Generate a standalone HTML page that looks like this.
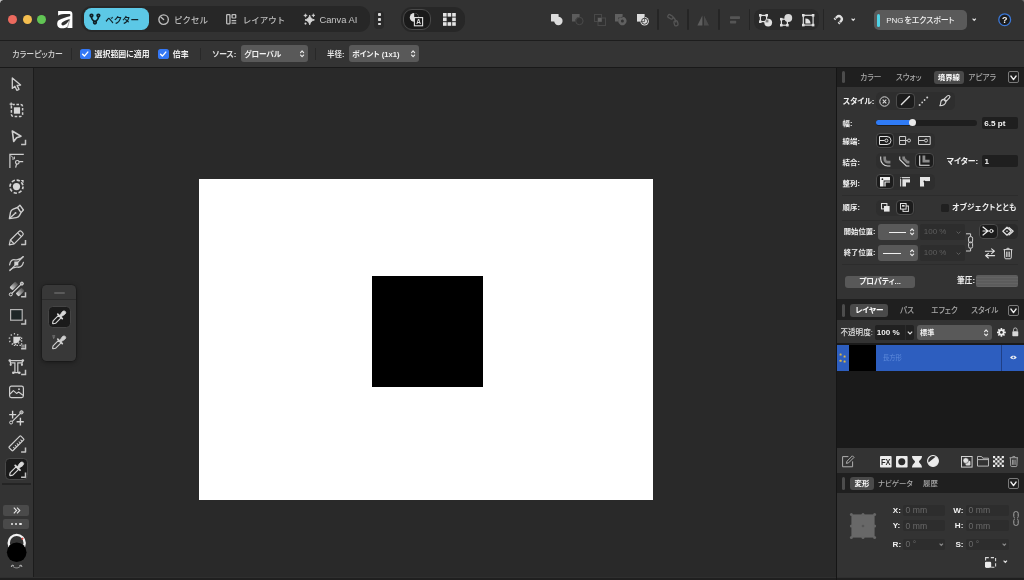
<!DOCTYPE html>
<html lang="ja">
<head>
<meta charset="utf-8">
<title>Affinity</title>
<style>
*{box-sizing:border-box;margin:0;padding:0}
html,body{width:1024px;height:580px;overflow:hidden;background:#292929}
body{position:relative;font-family:"Liberation Sans","Noto Sans CJK JP",sans-serif;font-size:8px;color:#e6e6e6;-webkit-font-smoothing:antialiased}
.abs{position:absolute}
.t{position:absolute;white-space:nowrap;line-height:12px;height:12px;font-size:8px;font-feature-settings:"palt"}
.np{font-feature-settings:normal}
.b{font-weight:700}
.m{font-weight:500}
svg{position:absolute;overflow:visible}
/* top toolbar */
#top{left:0;top:0;width:1024px;height:40px;background:#323232}
#topline{left:0;top:40px;width:1024px;height:1px;background:#1d1d1d}
#ctx{left:0;top:41px;width:1024px;height:26px;background:#343434}
#ctxline{left:0;top:67px;width:1024px;height:1px;background:#191919}
/* left tools */
#left{left:0;top:68px;width:33px;height:512px;background:#333333}
#leftline{left:33px;top:68px;width:1.3px;height:512px;background:#1c1c1c}
/* canvas */
#canvas{left:34.3px;top:68px;width:801.7px;height:512px;background:#292929}
#page{left:198.5px;top:178.5px;width:454.5px;height:321px;background:#ffffff}
#sq{left:371.7px;top:275.6px;width:111.4px;height:111.3px;background:#000}
/* right */
#right{left:836px;top:68px;width:188px;height:512px;background:#333333}
.hdr{position:absolute;left:836px;width:188px;background:#1f1f1f}
.pill{position:absolute;background:#4a4a4a;border-radius:3px}
.sel{position:absolute;background:#1c1c1c;border:1px solid #4c4c4c;border-radius:4px}
.dd{position:absolute;background:#595959;border-radius:3px}
.inp{position:absolute;background:#1f1f1f;border-radius:2px}
.fld{position:absolute;background:#2d2d2d;border-radius:2px}
.sep{position:absolute;width:1.7px;background:#252525;top:9px;height:21px;border-radius:1px}
.hl{position:absolute;height:1px;background:#2c2c2c;left:842px;width:176px}
.grip{position:absolute;width:3px;background:#4c4c4c;border-radius:1.5px;left:842.2px}
.vbtn{position:absolute;left:1007.5px;width:11.5px;height:11.5px;border:1px solid #7a7a7a;border-radius:2px}
.g{color:#a8a8a8}
.dim{color:#666}
</style>
</head>
<body>
<div id="root" style="position:absolute;left:0;top:0;width:1024px;height:580px;transform:translateZ(0);will-change:transform">
<div id="top" class="abs"></div>
<div id="topline" class="abs"></div>
<div id="ctx" class="abs"></div>
<div id="ctxline" class="abs"></div>
<div id="left" class="abs"></div>
<div id="leftline" class="abs"></div>
<div id="canvas" class="abs"></div>
<div id="page" class="abs"></div>
<div id="sq" class="abs"></div>
<div id="right" class="abs"></div>

<!-- ===== TOP BAR ===== -->
<div class="abs" style="left:8.4px;top:14.9px;width:9px;height:9px;border-radius:50%;background:#ec6a5e"></div>
<div class="abs" style="left:22.75px;top:14.9px;width:9px;height:9px;border-radius:50%;background:#f4be4f"></div>
<div class="abs" style="left:37px;top:14.9px;width:9px;height:9px;border-radius:50%;background:#61c554"></div>
<svg style="left:56.6px;top:10.5px" width="16" height="18" viewBox="0 0 16 18">
  <path fill="#ffffff" d="M1.1,0.1 H12.4 C14.4,0.1 15.4,1.2 15.4,3 V16.9 H10.1 L10.5,15.7 C8.6,17 6,17.6 3.8,17.2 C1.4,16.8 0,15 0.16,12.4 C0.3,10.8 0.8,9.6 1.4,8.5 L1.1,4.6 Z"/>
  <path fill="#323232" d="M-0.5,4.4 L1.1,4.4 C3.4,3.3 7,2.9 12.8,3.1 C13.6,3.6 13.6,4.8 12.8,5.3 C9,6 4.8,7.6 1.7,9.3 L-0.5,11 Z"/>
  <path fill="#323232" d="M12.8,8 C10,8.9 6.8,10.1 5.1,11.6 C3.8,12.8 4.3,14.5 5.9,14.4 C8.2,14.2 11.2,11.6 12.8,8 Z"/>
  <path d="M12.8,8.5 L10.4,16.6" stroke="#323232" stroke-width="0.45" fill="none"/>
</svg>
<div class="abs" style="left:81px;top:6.4px;width:289px;height:26px;border-radius:11px;background:#272727"></div>
<div class="abs" style="left:83.5px;top:8.1px;width:65.7px;height:22.4px;border-radius:7.5px;background:#5cc8e6"></div>
<svg style="left:89px;top:13px" width="12" height="12" viewBox="0 0 12 12" fill="none" stroke="#0f1f25" stroke-width="1.7">
  <circle cx="2.5" cy="2.6" r="1.3"/><circle cx="9.4" cy="2.6" r="1.3"/><circle cx="5.95" cy="9.5" r="1.3"/>
  <path d="M2.5,4 C2.5,6.8 4.2,7.4 5,8.4 M9.4,4 C9.4,6.8 7.7,7.4 6.9,8.4"/>
</svg>
<div class="t b np" style="left:105.3px;top:13.5px;font-size:8.5px;color:#122329">ベクター</div>
<svg style="left:157.6px;top:13.8px" width="11.6" height="11.6" viewBox="0 0 12 12" fill="none" stroke="#bdbdbd" stroke-width="1.4">
  <circle cx="5.8" cy="5.8" r="4.9"/><path d="M5.8,5.8 L3.2,3.4" stroke-linecap="round"/>
</svg>
<div class="t m np" style="left:174px;top:13.5px;font-size:8.5px;color:#bdbdbd">ピクセル</div>
<svg style="left:226.4px;top:14px" width="10.6" height="10.6" viewBox="0 0 11 12" preserveAspectRatio="none" fill="none" stroke="#bdbdbd" stroke-width="1.35">
  <rect x="0.7" y="0.7" width="3.4" height="10.4" rx="0.6"/><rect x="6.3" y="0.7" width="3.8" height="3.8" rx="0.6"/>
  <path d="M5.8,7.4 H10.6 M5.8,10.4 H10.6"/>
</svg>
<div class="t m np" style="left:242.8px;top:13.5px;font-size:8.5px;color:#bdbdbd">レイアウト</div>
<svg style="left:302.5px;top:13px" width="13" height="13" viewBox="0 0 13 13" fill="#d4d4d4">
  <path d="M6.7,2.2 C7.3,4.8 8.4,5.9 11.4,6.9 C8.4,7.9 7.3,9 6.7,11.8 C6.1,9 5,7.9 2,6.9 C5,5.9 6.1,4.8 6.7,2.2 Z" stroke="#d4d4d4" stroke-width="0.9" stroke-linejoin="round"/>
  <path d="M2.5,0.8 C2.7,1.9 3,2.2 4.2,2.5 C3,2.8 2.7,3.1 2.5,4.2 C2.3,3.1 2,2.8 0.8,2.5 C2,2.2 2.3,1.9 2.5,0.8 Z" stroke="#d4d4d4" stroke-width="0.7" stroke-linejoin="round"/>
  <path d="M10.4,0.7 C10.6,1.8 10.8,2.1 12,2.4 C10.8,2.7 10.6,3 10.4,4.1 C10.2,3 10,2.7 8.8,2.4 C10,2.1 10.2,1.8 10.4,0.7 Z" stroke="#d4d4d4" stroke-width="0.6" stroke-linejoin="round"/>
  <circle cx="2.5" cy="10.6" r="1.05"/>
</svg>
<div class="t" style="left:319.4px;top:13.5px;font-size:9.4px;color:#c4c4c4">Canva AI</div>
<div class="abs" style="left:374.4px;top:10.5px;width:10px;height:18px;border-radius:4px;background:#2a2a2a"></div>
<div class="abs" style="left:378px;top:13.4px;width:2.8px;height:2.8px;border-radius:.8px;background:#d8d8d8"></div>
<div class="abs" style="left:378px;top:18px;width:2.8px;height:2.8px;border-radius:.8px;background:#d8d8d8"></div>
<div class="abs" style="left:378px;top:22.5px;width:2.8px;height:2.8px;border-radius:.8px;background:#d8d8d8"></div>
<div class="abs" style="left:401px;top:7px;width:64px;height:25.4px;border-radius:11px;background:#272727"></div>
<div class="abs" style="left:403px;top:9px;width:27.6px;height:21.4px;border-radius:9px;background:#1a1a1a;border:1.2px solid #4a4a4a"></div>
<svg style="left:409.4px;top:12.2px" width="15" height="15" viewBox="0 0 15 15">
  <circle cx="5.2" cy="5.4" r="4.4" fill="#e0e0e0"/>
  <path d="M5.2,5.4 L5.2,1 A4.4,4.4 0 0 1 9.6,5.4 Z" fill="#1a1a1a"/>
  <rect x="5.4" y="5.6" width="8.2" height="8.2" fill="#1a1a1a" stroke="#e0e0e0" stroke-width="1.1"/>
  <text x="9.5" y="12.4" font-size="6.5" font-weight="700" fill="#e0e0e0" text-anchor="middle" font-family="Liberation Sans, sans-serif">A</text>
</svg>
<svg style="left:443.3px;top:13.1px" width="12.8" height="12.8" viewBox="0 0 13.4 13.4" fill="#e4e4e4">
  <rect x="0" y="0" width="3.8" height="3.8"/><rect x="4.8" y="0" width="3.8" height="3.8"/><rect x="9.6" y="0" width="3.8" height="3.8"/>
  <rect x="0" y="4.8" width="3.8" height="3.8"/><rect x="9.6" y="4.8" width="3.8" height="3.8"/>
  <rect x="0" y="9.6" width="3.8" height="3.8"/><rect x="4.8" y="9.6" width="3.8" height="3.8"/><rect x="9.6" y="9.6" width="3.8" height="3.8"/>
</svg>
<!-- boolean ops -->
<svg style="left:551px;top:14px" width="12" height="12" viewBox="0 0 12 12" fill="#dcdcdc">
  <rect x="0" y="0" width="7.6" height="7.6" rx="0.6"/><circle cx="7.4" cy="7" r="4.2"/>
</svg>
<svg style="left:572.2px;top:14px" width="12" height="12" viewBox="0 0 12 12">
  <path fill="#5c5c5c" d="M0,0 H7.6 V3 A4.2,4.2 0 0 0 3.2,7.6 H0 Z"/><circle cx="7.4" cy="7" r="3.7" fill="none" stroke="#4a4a4a" stroke-width="1"/>
</svg>
<svg style="left:593.5px;top:14px" width="12" height="12" viewBox="0 0 12 12">
  <rect x="0.5" y="0.5" width="7" height="7" fill="none" stroke="#484848" stroke-width="1"/><rect x="4" y="4" width="7.5" height="7.5" fill="none" stroke="#484848" stroke-width="1"/>
  <rect x="4" y="4" width="3.6" height="3.6" fill="#606060"/>
</svg>
<svg style="left:615px;top:14px" width="12" height="12" viewBox="0 0 12 12">
  <path fill="#606060" fill-rule="evenodd" d="M0,0 H7.6 V7.6 H0 Z M7.4,2.8 A4.2,4.2 0 1 1 7.39,2.8 Z M3.4,3.4 H7.6 V7.6 H3.4 Z"/>
  <circle cx="7.4" cy="7" r="1.5" fill="#323232"/>
</svg>
<svg style="left:636.6px;top:14px" width="12" height="12" viewBox="0 0 12 12">
  <rect x="0" y="0" width="7.6" height="7.6" fill="#dcdcdc"/>
  <circle cx="7.6" cy="7.2" r="4.3" fill="#dcdcdc"/>
  <circle cx="7.6" cy="7.2" r="3" fill="none" stroke="#323232" stroke-width="0.9"/>
  <path d="M3.6,7.6 H7.6 V3.4" fill="none" stroke="#323232" stroke-width="0.7"/>
</svg>
<div class="sep" style="left:657px"></div>
<svg style="left:667px;top:13.6px" width="13" height="12" viewBox="0 0 13 12" fill="none" stroke="#555555" stroke-width="1.3">
  <rect x="0.8" y="1.2" width="5.2" height="3.2" rx="1" transform="rotate(30 3.4 2.8)"/>
  <path d="M6,3.5 C8,4 8.5,6 9,8.5"/>
  <rect x="7.2" y="6.8" width="3.6" height="5" rx="1.4" transform="rotate(-15 9 9.3)"/>
</svg>
<div class="sep" style="left:687.3px"></div>
<svg style="left:697.3px;top:15px" width="12.4" height="11" viewBox="0 0 12.4 11">
  <path d="M5.4,0.4 V10.6 H0.4 Z" fill="#5e5e5e"/><path d="M7,0.4 V10.6 H12 Z" fill="#4a4a4a"/>
</svg>
<div class="sep" style="left:718px"></div>
<svg style="left:730px;top:16.2px" width="11" height="8" viewBox="0 0 11 8" fill="#555555">
  <rect x="0" y="0.3" width="10" height="2.6" rx="0.6"/><rect x="0" y="4.8" width="6.2" height="2.6" rx="0.6"/>
</svg>
<div class="sep" style="left:748.6px"></div>
<div class="abs" style="left:753.7px;top:9.4px;width:65.8px;height:20.8px;border-radius:8px;background:#2a2a2a"></div>
<svg style="left:758.8px;top:13.5px" width="13.4" height="12.6" viewBox="0 0 13.4 12.6">
  <rect x="1.4" y="1.4" width="6.2" height="6.2" fill="none" stroke="#e0e0e0" stroke-width="1.2"/>
  <g fill="#e0e0e0"><rect x="0" y="0" width="2.6" height="2.6"/><rect x="6.4" y="0" width="2.6" height="2.6"/><rect x="0" y="6.4" width="2.6" height="2.6"/></g>
  <circle cx="9.2" cy="8.6" r="3.9" fill="#e0e0e0"/><rect x="6.6" y="5.6" width="2.8" height="2.8" fill="#2a2a2a" opacity=".55"/>
</svg>
<svg style="left:780.2px;top:13.6px" width="12.4" height="12.6" viewBox="0 0 12.4 12.6">
  <rect x="1.4" y="5.2" width="6" height="6" fill="none" stroke="#e0e0e0" stroke-width="1.2"/>
  <g fill="#e0e0e0"><rect x="0" y="3.9" width="2.6" height="2.6"/><rect x="0" y="9.9" width="2.6" height="2.6"/><rect x="6.1" y="9.9" width="2.6" height="2.6"/></g>
  <circle cx="8.3" cy="4" r="3.9" fill="#d8d8d8"/>
</svg>
<svg style="left:801.8px;top:13.8px" width="12.4" height="12.4" viewBox="0 0 12.4 12.4">
  <rect x="1.3" y="1.3" width="9.8" height="9.8" fill="none" stroke="#e0e0e0" stroke-width="1.2"/>
  <g fill="#e0e0e0"><rect x="0" y="0" width="2.6" height="2.6"/><rect x="9.8" y="0" width="2.6" height="2.6"/><rect x="0" y="9.8" width="2.6" height="2.6"/><rect x="9.8" y="9.8" width="2.6" height="2.6"/></g>
  <path d="M3.4,9.4 V4.4 A5,5 0 0 1 8.6,9.4 Z" fill="#e0e0e0"/>
</svg>
<div class="sep" style="left:822.8px"></div>
<svg style="left:833.4px;top:14.4px" width="11" height="11" viewBox="0 0 11 11" fill="none" stroke="#e0e0e0">
  <g transform="translate(5.9,5.1) rotate(45)"><path d="M-2.9,3.5 V0 A2.9,2.9 0 0 1 2.9,0 V3.5" stroke-width="2.3"/><path d="M-4.4,1.7 H-1.4 M1.4,1.7 H4.4" stroke="#323232" stroke-width="0.9"/></g>
</svg>
<svg style="left:851.4px;top:17.9px" width="4.4" height="3.2" viewBox="0 0 6 4" fill="none" stroke="#e0e0e0" stroke-width="1.7"><path d="M0.8,0.7 L3,3 L5.2,0.7"/></svg>
<div class="abs" style="left:874px;top:10.3px;width:93px;height:19.4px;border-radius:5px;background:#5a5a5a"></div>
<div class="abs" style="left:876.8px;top:13.5px;width:3.1px;height:13px;border-radius:1.5px;background:#4fd3e6"></div>
<div class="t m" style="left:886.3px;top:14.5px;font-size:8px;letter-spacing:-0.1px;color:#f0f0f0">PNG<span style="margin-left:1px">をエクスポート</span></div>
<svg style="left:971.8px;top:18.4px" width="4.4" height="3.2" viewBox="0 0 6 4" fill="none" stroke="#e0e0e0" stroke-width="1.7"><path d="M0.8,0.7 L3,3 L5.2,0.7"/></svg>
<svg style="left:998px;top:13.4px" width="13.4" height="13.4" viewBox="0 0 13.4 13.4">
  <circle cx="6.7" cy="6.7" r="5.9" fill="#1c1c1c" stroke="#3b78d8" stroke-width="1.3"/>
  <text x="6.7" y="9.9" font-size="9" font-weight="700" fill="#f2f2f2" text-anchor="middle" font-family="Liberation Sans, sans-serif">?</text>
</svg>

<!-- ===== CONTEXT BAR ===== -->
<div class="t m" style="left:12.2px;top:49.3px;font-size:7.9px;color:#d6d6d6">カラーピッカー</div>
<div class="abs" style="left:71px;top:48px;width:1px;height:12px;background:#282828"></div>
<div class="abs" style="left:80.4px;top:48.5px;width:10.2px;height:10.2px;border-radius:2.6px;background:#3478f6"></div>
<svg style="left:80.4px;top:48.5px" width="10.2" height="10.2" viewBox="0 0 10.2 10.2" fill="none" stroke="#ffffff" stroke-width="1.4" stroke-linecap="round" stroke-linejoin="round"><path d="M2.6,5.3 L4.4,7.1 L7.8,3.1"/></svg>
<div class="t b" style="left:94.6px;top:49.3px;font-size:7.9px;color:#f2f2f2">選択範囲に適用</div>
<div class="abs" style="left:158.4px;top:48.5px;width:10.2px;height:10.2px;border-radius:2.6px;background:#3478f6"></div>
<svg style="left:158.4px;top:48.5px" width="10.2" height="10.2" viewBox="0 0 10.2 10.2" fill="none" stroke="#ffffff" stroke-width="1.4" stroke-linecap="round" stroke-linejoin="round"><path d="M2.6,5.3 L4.4,7.1 L7.8,3.1"/></svg>
<div class="t b" style="left:172.8px;top:49.3px;font-size:7.9px;color:#f2f2f2">倍率</div>
<div class="abs" style="left:199.6px;top:48px;width:1px;height:12px;background:#282828"></div>
<div class="t b" style="left:212.2px;top:49.3px;font-size:7.8px;color:#e0e0e0">ソース:</div>
<div class="dd" style="left:241.2px;top:44.9px;width:66.6px;height:17.5px"></div>
<div class="t b" style="left:244.2px;top:48.6px;font-size:7.6px;color:#f2f2f2">グローバル</div>
<svg style="left:300px;top:50.2px" width="4.2" height="7.6" viewBox="0 0 5 9" fill="none" stroke="#e8e8e8" stroke-width="1.4" stroke-linecap="round" stroke-linejoin="round"><path d="M0.7,3 L2.5,1 L4.3,3 M0.7,6 L2.5,8 L4.3,6"/></svg>
<div class="abs" style="left:314.6px;top:48px;width:1px;height:12px;background:#282828"></div>
<div class="t b" style="left:327px;top:49.3px;font-size:7.5px;color:#e0e0e0">半径:</div>
<div class="dd" style="left:348.7px;top:45.2px;width:70px;height:17.3px"></div>
<div class="t b" style="left:352.2px;top:48.6px;font-size:7.6px;color:#f2f2f2">ポイント (1x1)</div>
<svg style="left:411px;top:50.2px" width="4.2" height="7.6" viewBox="0 0 5 9" fill="none" stroke="#e8e8e8" stroke-width="1.4" stroke-linecap="round" stroke-linejoin="round"><path d="M0.7,3 L2.5,1 L4.3,3 M0.7,6 L2.5,8 L4.3,6"/></svg>

<!-- ===== LEFT TOOLS ===== -->

<!-- 1 move -->
<svg style="left:8px;top:76px" width="17" height="17" viewBox="0 0 17 17" fill="none" stroke="#cfcfcf" stroke-width="1.3" stroke-linejoin="round">
  <path d="M4.3,1.9 L4.3,12.4 L6.9,10.3 L8.8,14.3 L11,13.3 L9.1,9.4 L12.6,9.1 Z"/>
</svg>
<!-- 2 artboard -->
<svg style="left:8px;top:102px" width="17" height="17" viewBox="0 0 17 17" fill="none" stroke="#cfcfcf" stroke-width="1.3">
  <rect x="3.4" y="2.6" width="11.2" height="11.8" rx="2" stroke-width="1.5" stroke-dasharray="2.6 1.6" stroke-dashoffset="1.2"/>
  <rect x="5.9" y="5.3" width="6.2" height="6.4" fill="#d6d6d6" stroke="none"/>
  <path d="M1.6,2.1 H4.8 M3.2,0.5 V3.7" stroke-width="1.1"/>
</svg>
<!-- 3 node -->
<svg style="left:8px;top:128px" width="19" height="18" viewBox="0 0 19 18" fill="none" stroke="#cfcfcf" stroke-width="1.6" stroke-linejoin="round">
  <path d="M4.3,3 L13,8.2 L8.6,9.8 L5.7,13.4 Z"/>
  <path d="M17.5,11.8 V16.4 H13.1" stroke-width="1.5" stroke="#c4c4c4"/>
</svg>
<!-- 4 corner -->
<svg style="left:8px;top:153px" width="17" height="17" viewBox="0 0 17 17" fill="none" stroke="#cfcfcf" stroke-width="1.2">
  <path d="M1.9,15 V1.4 H15.8"/>
  <path d="M2.8,2.4 L5.6,5.2" stroke-width="1"/><path d="M6.4,3.6 V6 H4" stroke-width="1"/>
  <circle cx="9.3" cy="9.3" r="1.8"/>
  <path d="M11.1,8.7 H15.2 M8.6,11 L7.6,14.6"/>
</svg>
<!-- 5 dashed circle -->
<svg style="left:8px;top:178px" width="17" height="17" viewBox="0 0 17 17" fill="none" stroke="#cfcfcf" stroke-width="1.5">
  <circle cx="8.5" cy="8.6" r="6.5" stroke-width="1.7" stroke-dasharray="3.3 1.8" stroke-dashoffset="0.6"/>
  <circle cx="8.5" cy="8.6" r="3.6" fill="#d8d8d8" stroke="none"/>
  <path d="M12.6,1.9 H15.6 V4.9 Z" fill="#d8d8d8" stroke="none"/>
</svg>
<!-- 6 pen -->
<svg style="left:8px;top:204px" width="17" height="17" viewBox="0 0 17 17" fill="none" stroke="#cfcfcf" stroke-width="1.35" stroke-linejoin="round">
  <path d="M1.4,14.6 L2.5,8.4 C2.8,6.8 3.8,5.8 5.2,5.2 L9.5,3.5 L13,8.6 L11.4,11.6 C10.8,12.8 9.8,13.4 8.4,13.6 Z"/>
  <path d="M9.5,3.5 L11.9,1.2 L15.4,6 L13,8.6"/>
  <path d="M1.8,14.2 L6.9,9.4"/><circle cx="7.5" cy="8.9" r="1" fill="#cfcfcf" stroke="none"/>
</svg>
<!-- 7 pencil -->
<svg style="left:8px;top:230px" width="19" height="18" viewBox="0 0 19 18" fill="none" stroke="#cfcfcf" stroke-width="1.2" stroke-linejoin="round">
  <path d="M1.3,14.8 L2.4,10 L10.8,1.6 C11.6,0.8 12.8,0.8 13.6,1.6 L14.6,2.6 C15.4,3.4 15.4,4.6 14.6,5.4 L6.2,13.8 Z"/>
  <path d="M2.4,10 L6.2,13.8 M9.6,2.8 L13.4,6.6"/>
  <path d="M17.5,10.0 V14.6 H13.1" stroke-width="1.5" stroke="#c4c4c4"/>
</svg>
<!-- 8 smooth -->
<svg style="left:8px;top:255px" width="17" height="17" viewBox="0 0 17 17" fill="none" stroke="#c8c8c8" stroke-width="1.3" stroke-linecap="round">
  <path d="M1.6,9.8 C2.4,5.8 4.4,4.2 7,4.8 C10,5.4 12.4,4.6 15,1.8"/>
  <path d="M2,15 C4.6,12.4 6.8,11.8 9.6,12.2 C12.2,12.6 14.4,11 15.4,7.4"/>
  <path d="M1.8,15.6 L15.4,1.6" stroke-width="1.1"/>
  <rect x="6.3" y="6.5" width="4" height="4" fill="#d4d4d4" stroke="none"/>
</svg>
<!-- 9 gradient -->
<svg style="left:8px;top:281px" width="19" height="19" viewBox="0 0 19 19">
  <defs><linearGradient id="gg1" x1="0" y1="0" x2="1" y2="0"><stop offset="0" stop-color="#dcdcdc"/><stop offset="1" stop-color="#505050"/></linearGradient></defs>
  <g transform="translate(6.2,5.2) rotate(-45)"><rect x="-4.2" y="-2.6" width="8.4" height="4.4" rx="1.2" fill="url(#gg1)"/></g>
  <g transform="translate(11.8,10.8) rotate(-45)"><rect x="-4.2" y="-1.8" width="8.4" height="4.4" rx="1.2" fill="url(#gg1)"/></g>
  <path d="M3.6,12.6 L13,3.4" stroke="#e0e0e0" stroke-width="1.1" fill="none"/>
  <circle cx="2.8" cy="13.4" r="1.5" fill="#333" stroke="#e0e0e0" stroke-width="1"/>
  <circle cx="13.9" cy="2.6" r="1.5" fill="#9a9a9a" stroke="#e0e0e0" stroke-width="1"/>
  <path d="M17.5,11.2 V15.8 H13.1" stroke-width="1.5" stroke="#c4c4c4" fill="none"/>
</svg>
<!-- 10 rectangle -->
<svg style="left:8px;top:307px" width="19" height="19" viewBox="0 0 19 19" fill="none">
  <rect x="2.6" y="2.6" width="11.6" height="10.6" fill="#1e2728" stroke="#b4b4b4" stroke-width="1.2"/>
  <path d="M17.5,12.4 V17.0 H13.1" stroke-width="1.5" stroke="#c4c4c4"/>
</svg>
<!-- 11 shape builder -->
<svg style="left:8px;top:332px" width="19" height="19" viewBox="0 0 19 19" fill="none">
  <circle cx="6.8" cy="7.2" r="5.4" stroke="#c8c8c8" stroke-width="1.5" stroke-dasharray="1.3 2.1"/>
  <path d="M5.4,4.8 H12.2 C12.2,9.6 10,11.6 5.4,11.8 Z" fill="#d8d8d8"/>
  <path d="M13.6,5.4 V13.4 H5.8" stroke="#c8c8c8" stroke-width="1.3" stroke-dasharray="1.5 1.4"/>
  <rect x="13.4" y="12.6" width="3.2" height="3.2" fill="#8a8a8a"/>
  <path d="M17.5,12.2 V16.8 H13.1" stroke-width="1.5" stroke="#c4c4c4"/>
</svg>
<!-- 12 text -->
<svg style="left:8px;top:358px" width="19" height="19" viewBox="0 0 19 19" fill="none" stroke="#cfcfcf" stroke-width="1.2">
  <path d="M1.8,2.6 H14.8 M2.1,2.8 L2.7,6.4 M14.5,2.8 L13.9,6.4 M2.8,4.9 H6.9 V14 M13.8,4.9 H9.8 V14 M5.4,14.6 H11.2"/>
  <g fill="#cfcfcf" stroke="none"><circle cx="1.8" cy="2.5" r="1.3"/><circle cx="14.8" cy="2.5" r="1.3"/><circle cx="2.7" cy="6.8" r="1.1"/><circle cx="13.9" cy="6.8" r="1.1"/><circle cx="5.3" cy="14.7" r="1.3"/><circle cx="11.3" cy="14.7" r="1.3"/></g>
  <path d="M17.5,11.8 V16.4 H13.1" stroke-width="1.5" stroke="#c4c4c4"/>
</svg>
<!-- 13 image -->
<svg style="left:8px;top:384px" width="17" height="16" viewBox="0 0 17 16" fill="none" stroke="#cfcfcf" stroke-width="1.2" stroke-linejoin="round">
  <rect x="1.6" y="2.2" width="13.8" height="11.4" rx="1.8"/>
  <path d="M2,10 L5.4,6.6 L8.6,9.4 L10.6,8 L15,11.2"/>
  <circle cx="11" cy="5.2" r="0.9" fill="#cfcfcf" stroke="none"/>
</svg>
<!-- 14 vector crop -->
<svg style="left:8px;top:409px" width="17" height="17" viewBox="0 0 17 17" fill="none" stroke="#d4d4d4" stroke-width="1.4">
  <path d="M1.2,5.6 H8.2 M4.6,1.8 V9.6"/>
  <path d="M8.6,12.8 H15.8 M12.4,8.8 V16.4"/>
  <path d="M3.8,12.8 L12.8,4" stroke-width="1.1"/>
  <circle cx="3.1" cy="13.5" r="1.5" fill="#333" stroke-width="1"/>
  <circle cx="13.5" cy="3.3" r="1.6" fill="#9a9a9a" stroke-width="1"/>
</svg>
<!-- 15 ruler -->
<svg style="left:8px;top:435px" width="19" height="19" viewBox="0 0 19 19" fill="none" stroke="#cfcfcf" stroke-width="1.2" stroke-linejoin="round">
  <g transform="rotate(-45 8.5 8.4)"><rect x="0.2" y="5.6" width="16.6" height="5.4" rx="0.8"/>
  <path d="M3.6,11 V8.6 M6.2,11 V8.6 M8.8,11 V8.6 M11.4,11 V8.6 M14,11 V8.6" stroke-width="1"/></g>
  <path d="M17.5,12.4 V17.0 H13.1" stroke-width="1.5" stroke="#c4c4c4"/>
</svg>
<!-- 16 picker selected -->
<div class="sel" style="left:4.6px;top:457.8px;width:23.6px;height:22px;border-radius:4.5px;background:#1b1b1b;border-color:#484848"></div>
<svg style="left:8px;top:460px" width="19" height="19" viewBox="0 0 19 19" fill="none" stroke="#d8d8d8" stroke-width="1.2" stroke-linejoin="round">
  <g id="dropper"><path d="M1.7,15.2 L2.2,12.6 L8,6.8 L10.6,9.4 L4.8,15.2 L2.2,15.7 Z" fill="none"/>
  <path d="M7.2,5.4 L12,10.2" stroke-width="1.8" stroke-linecap="round"/>
  <path d="M9.4,7 L11.4,3.6 C12.4,2 14.2,1.6 15.2,2.6 C16.2,3.6 15.6,5.2 14,6.2 L10.6,8.2 Z" fill="#d8d8d8" stroke-width="0.8"/></g>
  <path d="M17.5,12.6 V17.2 H13.1" stroke-width="1.5" stroke="#c4c4c4"/>
</svg>
<div class="abs" style="left:2px;top:483.4px;width:28.6px;height:1.2px;background:#242424"></div>
<div class="abs" style="left:3.2px;top:505.4px;width:26.2px;height:11px;border-radius:2px;background:#4a4a4a"></div>
<svg style="left:12.6px;top:507.4px" width="8" height="7" viewBox="0 0 8 7" fill="none" stroke="#e4e4e4" stroke-width="1.1"><path d="M0.8,0.6 L3.6,3.5 L0.8,6.4 M4,0.6 L6.8,3.5 L4,6.4"/></svg>
<div class="abs" style="left:3.2px;top:519px;width:26.2px;height:10.2px;border-radius:2px;background:#4a4a4a"></div>
<div class="abs" style="left:10.9px;top:522.9px;width:2.4px;height:2.4px;border-radius:50%;background:#ececec"></div>
<div class="abs" style="left:15.1px;top:522.9px;width:2.4px;height:2.4px;border-radius:50%;background:#ececec"></div>
<div class="abs" style="left:19.3px;top:522.9px;width:2.4px;height:2.4px;border-radius:50%;background:#ececec"></div>
<svg style="left:5px;top:531px" width="24" height="42" viewBox="0 0 24 42" fill="none">
  <circle cx="11.7" cy="11.9" r="8" stroke="#f2f2f2" stroke-width="2.4" fill="#333"/>
  <path d="M16.7,8.4 L18.1,7" stroke="#e0403a" stroke-width="1.4"/>
  <circle cx="11.7" cy="21.2" r="9.8" fill="#000000"/>
  <path d="M7.4,34.8 C9.8,37.6 13.4,37.6 15.8,34.8" stroke="#9a9a9a" stroke-width="1"/>
  <path d="M6.2,36 L7.1,34 L9,34.9 M17,36 L16.1,34 L14.2,34.9" stroke="#b4b4b4" stroke-width="1"/>
</svg>

<!-- ===== FLYOUT ===== -->
<div class="abs" style="left:42px;top:285px;width:34.2px;height:76.2px;border-radius:4.5px;background:#383838;box-shadow:0 1px 5px rgba(0,0,0,.45),0 0 0 0.5px rgba(0,0,0,.25)"></div>
<div class="abs" style="left:42px;top:298.8px;width:34.2px;height:1px;background:#2b2b2b"></div>
<div class="abs" style="left:53.8px;top:291.6px;width:11px;height:2px;border-radius:1px;background:#5a5a5a"></div>
<div class="sel" style="left:48.2px;top:306px;width:22.8px;height:22.2px;border-radius:4.5px;background:#1b1b1b;border-color:#454545"></div>
<svg style="left:51px;top:308.7px" width="17.9" height="17.9" viewBox="0 0 19 19" fill="none" stroke="#d8d8d8" stroke-width="1.2" stroke-linejoin="round">
  <path d="M1.7,15.2 L2.2,12.6 L8,6.8 L10.6,9.4 L4.8,15.2 L2.2,15.7 Z"/>
  <path d="M7.2,5.4 L12,10.2" stroke-width="1.8" stroke-linecap="round"/>
  <path d="M9.4,7 L11.4,3.6 C12.4,2 14.2,1.6 15.2,2.6 C16.2,3.6 15.6,5.2 14,6.2 L10.6,8.2 Z" fill="#d8d8d8" stroke-width="0.8"/>
</svg>
<svg style="left:51px;top:334px" width="17.9" height="17.9" viewBox="0 0 19 19" fill="none" stroke="#cfcfcf" stroke-width="1.2" stroke-linejoin="round">
  <path d="M1.7,15.2 L2.2,12.6 L8,6.8 L10.6,9.4 L4.8,15.2 L2.2,15.7 Z"/>
  <path d="M7.2,5.4 L12,10.2" stroke-width="1.8" stroke-linecap="round"/>
  <path d="M9.4,7 L11.4,3.6 C12.4,2 14.2,1.6 15.2,2.6 C16.2,3.6 15.6,5.2 14,6.2 L10.6,8.2 Z" fill="#cfcfcf" stroke-width="0.8"/>
  <path d="M1.4,2 H4.4 M1.9,3.4 H3.9 M2.4,4.6 H3.4" stroke="#9a9a9a" stroke-width="0.8"/>
</svg>

<!-- ===== STROKE PANEL ===== -->
<div class="hdr" style="top:68px;height:19.4px"></div>
<div class="grip" style="top:70.8px;height:12.4px"></div>
<div class="t m g" style="left:860.3px;top:71.8px;font-size:7.6px">カラー</div>
<div class="t m g" style="left:896px;top:71.8px;font-size:7.6px">スウォッ</div>
<div class="pill" style="left:933.5px;top:70.8px;width:30.4px;height:13px"></div>
<div class="t b" style="left:937.8px;top:71.8px;font-size:7.4px;color:#fff">境界線</div>
<div class="t m g" style="left:968.3px;top:71.8px;font-size:7.6px">アピアラ</div>
<div class="vbtn" style="top:71.4px"></div>
<svg style="left:1009.8px;top:74.6px" width="7" height="6" viewBox="0 0 7 6" fill="none" stroke="#f0f0f0" stroke-width="1.3" stroke-linecap="round" stroke-linejoin="round"><path d="M0.9,1 L3.5,4.6 L6.1,1"/></svg>

<div class="t b" style="left:842.8px;top:96px;font-size:7.8px;color:#f2f2f2">スタイル:</div>
<div class="abs" style="left:876px;top:91.6px;width:78.6px;height:18.6px;border-radius:5px;background:#2e2e2e"></div>
<svg style="left:879.4px;top:95.5px" width="11" height="11" viewBox="0 0 11 11" fill="none" stroke="#d8d8d8" stroke-width="1"><circle cx="5.5" cy="5.5" r="4.7"/><path d="M3.7,3.7 L7.3,7.3 M7.3,3.7 L3.7,7.3" stroke-width="1.1"/></svg>
<div class="sel" style="left:895.6px;top:92.8px;width:19.6px;height:16.2px;border-radius:4px"></div>
<svg style="left:900px;top:95.4px" width="11" height="11" viewBox="0 0 11 11" fill="none" stroke="#e0e0e0" stroke-width="1.4" stroke-linecap="round"><path d="M1.4,9.4 L9.4,1.6"/></svg>
<svg style="left:918.4px;top:95.6px" width="11" height="11" viewBox="0 0 11 11" fill="#cfcfcf"><circle cx="1.6" cy="9" r="1"/><circle cx="4.2" cy="6.4" r="0.9"/><circle cx="6.6" cy="4" r="0.9"/><circle cx="9.2" cy="1.6" r="1"/></svg>
<svg style="left:939.4px;top:94.6px" width="11.4" height="11.4" viewBox="0 0 11.4 11.4" fill="none" stroke="#d4d4d4" stroke-width="1.1" stroke-linejoin="round">
  <path d="M5.2,4 L8.4,0.9 C9.2,0.2 10.2,0.4 10.6,1 C11.2,1.6 11,2.4 10.4,3 L7.4,6.2 Z"/>
  <path d="M4.6,4.4 L7,6.8 C6.4,9 3.6,10.6 0.8,10.6 C1.8,9.6 1.6,8.6 1.8,7.2 C2,5.6 3.2,4.6 4.6,4.4 Z"/>
</svg>

<div class="t b" style="left:842.6px;top:117.9px;font-size:7.4px;color:#f2f2f2">幅:</div>
<div class="abs" style="left:876.2px;top:119.6px;width:101.2px;height:6.2px;border-radius:3.1px;background:#1e1e1e"></div>
<div class="abs" style="left:876.2px;top:119.9px;width:37px;height:5.6px;border-radius:2.8px;background:#2f7bf6"></div>
<div class="abs" style="left:909px;top:119.3px;width:7px;height:7px;border-radius:50%;background:#e8e8e8"></div>
<div class="inp" style="left:982.4px;top:117.2px;width:35.2px;height:12px"></div>
<div class="t b" style="left:984.2px;top:118.1px;font-size:8.1px;color:#f4f4f4">6.5 pt</div>

<div class="t b" style="left:842.6px;top:135.9px;font-size:7.4px;color:#f2f2f2">線端:</div>
<div class="abs" style="left:876px;top:132.6px;width:58.6px;height:16px;border-radius:5px;background:#2e2e2e"></div>
<div class="sel" style="left:876.2px;top:133.2px;width:17.8px;height:14.8px;border-radius:4px"></div>
<svg style="left:879px;top:135.8px" width="13" height="9" viewBox="0 0 13 9" fill="none" stroke="#e0e0e0" stroke-width="1"><path d="M0.5,0.5 H8 A4,4 0 0 1 8,8.5 H0.5 Z"/><path d="M0.5,4.5 H5.6"/><circle cx="7.4" cy="4.5" r="1.5"/></svg>
<svg style="left:899px;top:135.8px" width="13" height="9" viewBox="0 0 13 9" fill="none" stroke="#cfcfcf" stroke-width="1"><path d="M0.5,0.5 H6.6 V8.5 H0.5 Z"/><path d="M0.5,4.5 H8.4"/><circle cx="10" cy="4.5" r="1.5"/></svg>
<svg style="left:918.4px;top:135.8px" width="13" height="9" viewBox="0 0 13 9" fill="none" stroke="#cfcfcf" stroke-width="1"><path d="M0.5,0.5 H12.2 V8.5 H0.5 Z"/><path d="M0.5,4.5 H6.4"/><circle cx="8" cy="4.5" r="1.5"/></svg>

<div class="t b" style="left:842.6px;top:156.5px;font-size:7.4px;color:#f2f2f2">結合:</div>
<div class="abs" style="left:876px;top:152.8px;width:58.6px;height:16px;border-radius:5px;background:#2e2e2e"></div>
<svg style="left:879.6px;top:155.6px" width="11" height="11" viewBox="0 0 11 11" fill="none"><path d="M4.7,0.4 V3 A3.2,3.2 0 0 0 7.9,6.2 H10.4" stroke="#858585" stroke-width="2.7"/><path d="M0.7,0.4 V3 A7,7 0 0 0 7.7,10 H10.4" stroke="#d8d8d8" stroke-width="1.1"/></svg>
<svg style="left:899.4px;top:155.6px" width="11" height="11" viewBox="0 0 11 11" fill="none"><path d="M4.7,0.4 V2.6 L8.3,6.2 H10.4" stroke="#858585" stroke-width="2.7"/><path d="M0.7,0.4 V3.4 L7.3,10 H10.4" stroke="#d8d8d8" stroke-width="1.1"/></svg>
<div class="sel" style="left:915.4px;top:153.2px;width:18.4px;height:15px;border-radius:4px"></div>
<svg style="left:919px;top:155.4px" width="11" height="11" viewBox="0 0 11 11" fill="none"><path d="M4.9,0.4 V6.2 H10.6" stroke="#8c8c8c" stroke-width="2.8"/><path d="M0.7,0.4 V10.2 H10.6" stroke="#e4e4e4" stroke-width="1.1"/></svg>
<div class="t b" style="left:946.6px;top:156.2px;font-size:7.9px;color:#f2f2f2">マイター:</div>
<div class="inp" style="left:982.4px;top:155.4px;width:35.2px;height:12px"></div>
<div class="t b" style="left:984.4px;top:156.2px;font-size:8.1px;color:#f4f4f4">1</div>

<div class="t b" style="left:842.6px;top:177.9px;font-size:7.4px;color:#f2f2f2">整列:</div>
<div class="abs" style="left:876px;top:173.8px;width:58.6px;height:16px;border-radius:5px;background:#2e2e2e"></div>
<div class="sel" style="left:875.8px;top:174.2px;width:18.2px;height:15.2px;border-radius:4px"></div>
<svg style="left:880.4px;top:177.2px" width="10" height="10" viewBox="0 0 10 10"><path d="M0,0 H10 V3.6 H3.6 V9.6 H0 Z" fill="#f0f0f0"/><path d="M5,9.6 V5 H10" fill="none" stroke="#f0f0f0" stroke-width="1.2"/><circle cx="2.4" cy="2.2" r="0.9" fill="#1c1c1c"/></svg>
<svg style="left:900px;top:177.2px" width="10" height="10" viewBox="0 0 10 10"><path d="M0.6,9.6 V0.6 H10" fill="none" stroke="#d0d0d0" stroke-width="1.1"/><path d="M2.4,2.2 H10 V5.6 H6 V9.6 H2.4 Z" fill="#e4e4e4"/><circle cx="1.2" cy="1.2" r="0.9" fill="#1c1c1c"/></svg>
<svg style="left:920.2px;top:177.2px" width="10" height="10" viewBox="0 0 10 10"><path d="M0,0 H10 V4.4 H4.4 V9.6 H0 Z" fill="#e4e4e4"/><path d="M4.6,9.6 V4.6 H10" fill="none" stroke="#1c1c1c" stroke-width="0.8"/><circle cx="4.4" cy="4.4" r="0.9" fill="#1c1c1c"/></svg>

<div class="hl" style="top:195px"></div>
<div class="t b" style="left:842.6px;top:202.3px;font-size:7.4px;color:#f2f2f2">順序:</div>
<div class="abs" style="left:876px;top:199.6px;width:38.6px;height:16.2px;border-radius:5px;background:#2e2e2e"></div>
<svg style="left:880.8px;top:203px" width="9" height="9" viewBox="0 0 9 9"><rect x="0.5" y="0.5" width="5.4" height="5.4" fill="none" stroke="#e0e0e0" stroke-width="1"/><rect x="3" y="3" width="5.6" height="5.6" fill="#e8e8e8"/></svg>
<div class="sel" style="left:895.8px;top:200px;width:18.4px;height:15.4px;border-radius:4px"></div>
<svg style="left:900.4px;top:203.2px" width="9" height="9" viewBox="0 0 9 9"><rect x="3" y="3" width="5.4" height="5.4" fill="none" stroke="#e0e0e0" stroke-width="1"/><rect x="0.5" y="0.5" width="5.6" height="5.6" fill="#1c1c1c" stroke="#e0e0e0" stroke-width="1"/><rect x="2" y="2" width="2.6" height="1.6" fill="#e0e0e0"/></svg>
<div class="abs" style="left:941px;top:204.4px;width:7.6px;height:7.4px;border-radius:1.6px;background:#202020"></div>
<div class="t b" style="left:952.2px;top:202.2px;font-size:7.6px;letter-spacing:.33px;color:#f2f2f2">オブジェクトととも</div>
<div class="hl" style="top:220px"></div>

<div class="t b" style="left:843.8px;top:226.2px;font-size:7.3px;color:#f2f2f2">開始位置:</div>
<div class="dd" style="left:878.4px;top:224.2px;width:39.8px;height:15.6px"></div>
<div class="abs" style="left:889.2px;top:231.5px;width:17.2px;height:1.1px;background:#f0f0f0"></div>
<svg style="left:910.2px;top:228.3px" width="4.2" height="7.6" viewBox="0 0 5 9" fill="none" stroke="#e8e8e8" stroke-width="1.4" stroke-linecap="round" stroke-linejoin="round"><path d="M0.7,3 L2.5,1 L4.3,3 M0.7,6 L2.5,8 L4.3,6"/></svg>
<div class="fld" style="left:920px;top:224.4px;width:45px;height:15.2px"></div>
<div class="t" style="left:923.8px;top:226.2px;font-size:8px;color:#5e5e5e">100 %</div>
<svg style="left:955.6px;top:230.8px" width="5" height="3.4" viewBox="0 0 6 4" fill="none" stroke="#5e5e5e" stroke-width="1.2"><path d="M0.8,0.7 L3,3 L5.2,0.7"/></svg>
<div class="abs" style="left:979.2px;top:224px;width:38.6px;height:15.4px;border-radius:4.5px;background:#2b2b2b"></div>
<div class="sel" style="left:979.2px;top:224px;width:18.4px;height:15.2px;border-radius:4px"></div>
<svg style="left:982.4px;top:226.4px" width="12" height="10" viewBox="0 0 12 10" fill="none" stroke="#f0f0f0" stroke-width="1.2" stroke-linecap="round"><path d="M1,1 L6,5 L1,9 M1,5 H7.4"/><circle cx="9.4" cy="5" r="1.6" stroke-width="1"/></svg>
<svg style="left:1002.4px;top:226.2px" width="12" height="10.4" viewBox="0 0 12 10.4" fill="none" stroke="#e0e0e0" stroke-width="1.2" stroke-linejoin="round"><path d="M0.8,5.2 L5,1.2 L9.2,5.2 L5,9.2 Z"/><path d="M6.6,1.2 L11.2,5.2 L6.6,9.2" /><circle cx="5" cy="5.2" r="0.8" fill="#e0e0e0" stroke="none"/></svg>

<div class="t b" style="left:843.8px;top:247.4px;font-size:7.3px;color:#f2f2f2">終了位置:</div>
<div class="dd" style="left:878.4px;top:245.2px;width:39.8px;height:15.6px"></div>
<div class="abs" style="left:883px;top:252.5px;width:17.6px;height:1.1px;background:#f0f0f0"></div>
<svg style="left:910.2px;top:249.3px" width="4.2" height="7.6" viewBox="0 0 5 9" fill="none" stroke="#e8e8e8" stroke-width="1.4" stroke-linecap="round" stroke-linejoin="round"><path d="M0.7,3 L2.5,1 L4.3,3 M0.7,6 L2.5,8 L4.3,6"/></svg>
<div class="fld" style="left:920px;top:245.4px;width:45px;height:15.2px"></div>
<div class="t" style="left:923.8px;top:247.2px;font-size:8px;color:#5e5e5e">100 %</div>
<svg style="left:955.6px;top:251.8px" width="5" height="3.4" viewBox="0 0 6 4" fill="none" stroke="#5e5e5e" stroke-width="1.2"><path d="M0.8,0.7 L3,3 L5.2,0.7"/></svg>
<svg style="left:964.6px;top:232.6px" width="10" height="19" viewBox="0 0 10 19" fill="none" stroke="#d0d0d0" stroke-width="1"><path d="M1,0.8 H5.6 V3.2 M1,18 H5.6 V15.6"/><rect x="3.6" y="3.6" width="4" height="6.2" rx="1.6"/><rect x="3.6" y="9" width="4" height="6.2" rx="1.6"/></svg>
<svg style="left:983.6px;top:248px" width="12" height="11" viewBox="0 0 12 11" fill="none" stroke="#e0e0e0" stroke-width="1.1" stroke-linecap="round" stroke-linejoin="round"><path d="M1.4,3.2 H10.4 M7.6,0.8 L10.4,3.2 L7.6,5.6"/><path d="M10.6,7.6 H1.6 M4.4,5.4 L1.6,7.6 L4.4,10"/></svg>
<svg style="left:1003.4px;top:247px" width="10" height="12.4" viewBox="0 0 10 12.4" fill="none" stroke="#d8d8d8" stroke-width="1"><path d="M0.6,2.6 H9.4 M3.2,2.4 C3.4,0.8 6.6,0.8 6.8,2.4"/><path d="M1.4,2.8 L1.8,11 C1.9,11.6 2.3,11.8 2.8,11.8 H7.2 C7.7,11.8 8.1,11.6 8.2,11 L8.6,2.8"/><path d="M3.6,4.6 V10 M5,4.6 V10 M6.4,4.6 V10" stroke-width="0.9"/></svg>
<div class="hl" style="top:264.4px"></div>

<div class="dd" style="left:844.8px;top:276.2px;width:70.6px;height:11.6px;background:#585858"></div>
<div class="t b" style="left:844.8px;top:276px;width:70.6px;text-align:center;font-size:7.7px;color:#f4f4f4">プロパティ...</div>
<div class="t b" style="left:957px;top:275.4px;font-size:7.7px;color:#f2f2f2">筆圧:</div>
<div class="abs" style="left:976.4px;top:275.2px;width:41.4px;height:12.2px;border-radius:2px;background:repeating-linear-gradient(180deg,#5c5c5c 0,#5c5c5c 2px,#636363 2px,#636363 3px)"></div>

<!-- ===== LAYERS PANEL ===== -->
<div class="hdr" style="top:299px;height:21px;background:#1f1f1f"></div>
<div class="grip" style="top:304.4px;height:12.4px"></div>
<div class="pill" style="left:850.2px;top:304.2px;width:37.6px;height:12.6px"></div>
<div class="t b" style="left:855.2px;top:305px;font-size:7.6px;color:#fff">レイヤー</div>
<div class="t m g" style="left:900px;top:305px;font-size:7.6px">パス</div>
<div class="t m g" style="left:931.2px;top:305px;font-size:7.6px">エフェク</div>
<div class="t m g" style="left:971.2px;top:305px;font-size:7.6px">スタイル</div>
<div class="vbtn" style="top:304.6px"></div>
<svg style="left:1009.8px;top:307.8px" width="7" height="6" viewBox="0 0 7 6" fill="none" stroke="#f0f0f0" stroke-width="1.3" stroke-linecap="round" stroke-linejoin="round"><path d="M0.9,1 L3.5,4.6 L6.1,1"/></svg>

<div class="t m" style="left:840.4px;top:326.6px;font-size:7.6px;color:#e0e0e0">不透明度:</div>
<div class="inp" style="left:874.8px;top:325.4px;width:39.4px;height:14.4px;background:#212121"></div>
<div class="abs" style="left:905px;top:325.4px;width:1px;height:14.4px;background:#2c2c2c"></div>
<div class="t b" style="left:876.8px;top:326.8px;font-size:8.1px;color:#f2f2f2">100 %</div>
<svg style="left:907px;top:330.8px" width="6" height="4" viewBox="0 0 6 4" fill="none" stroke="#e0e0e0" stroke-width="1.2"><path d="M0.8,0.7 L3,3 L5.2,0.7"/></svg>
<div class="dd" style="left:916.8px;top:325.4px;width:75px;height:14.4px"></div>
<div class="t b" style="left:920px;top:326.8px;font-size:7.2px;color:#f2f2f2">標準</div>
<svg style="left:984.2px;top:328.9px" width="4.2" height="7.6" viewBox="0 0 5 9" fill="none" stroke="#e8e8e8" stroke-width="1.4" stroke-linecap="round" stroke-linejoin="round"><path d="M0.7,3 L2.5,1 L4.3,3 M0.7,6 L2.5,8 L4.3,6"/></svg>
<svg style="left:996.6px;top:328.2px" width="8.8" height="8.8" viewBox="0 0 10.4 10.4">
  <g fill="#ececec"><circle cx="5.2" cy="5.2" r="3.6"/>
  <g id="teeth"><rect x="4.2" y="0" width="2" height="10.4" rx="0.4"/><rect x="4.2" y="0" width="2" height="10.4" rx="0.4" transform="rotate(45 5.2 5.2)"/><rect x="4.2" y="0" width="2" height="10.4" rx="0.4" transform="rotate(90 5.2 5.2)"/><rect x="4.2" y="0" width="2" height="10.4" rx="0.4" transform="rotate(135 5.2 5.2)"/></g></g>
  <circle cx="5.2" cy="5.2" r="1.6" fill="#333"/>
</svg>
<svg style="left:1011.8px;top:327.4px" width="6.6" height="9.6" viewBox="0 0 8 11.4"><path d="M1.8,5 V3.2 A2.2,2.2 0 0 1 6.2,3.2 V5" fill="none" stroke="#d0d0d0" stroke-width="1"/><rect x="0.4" y="5" width="7.2" height="6" rx="0.8" fill="#d8d8d8"/></svg>

<div class="abs" style="left:836px;top:343.4px;width:188px;height:106px;background:#1a1a1a"></div>
<div class="abs" style="left:836px;top:344.6px;width:188px;height:26.4px;background:#2d5ebf"></div>
<div class="abs" style="left:848.6px;top:344.6px;width:27px;height:26.4px;background:#000"></div>
<div class="abs" style="left:1001px;top:344.6px;width:1px;height:26.4px;background:#1f3f86"></div>
<svg style="left:839.4px;top:352.6px" width="8" height="11" viewBox="0 0 8 11" fill="#d9b648"><rect x="0.6" y="0.6" width="2" height="2" rx="0.4"/><rect x="4.6" y="2.6" width="2" height="2" rx="0.4"/><rect x="0.6" y="6.8" width="2" height="2" rx="0.4"/><rect x="4.6" y="7.6" width="2" height="2" rx="0.4"/></svg>
<div class="t" style="left:883px;top:351.6px;font-size:6.3px;color:#5f8bdb">長方形</div>
<svg style="left:1010px;top:355.2px" width="6.8" height="4.9" viewBox="0 0 9 6.4"><path d="M0.2,3.2 C2,0.2 7,0.2 8.8,3.2 C7,6.2 2,6.2 0.2,3.2 Z" fill="#f4f4f4"/><circle cx="4.5" cy="3.2" r="1.4" fill="#2d5ebf"/></svg>

<div class="abs" style="left:836px;top:448.4px;width:188px;height:24.6px;background:#333333"></div>
<svg style="left:841.6px;top:455.2px" width="13" height="12.4" viewBox="0 0 13 12.4" fill="none" stroke="#b0b0b0" stroke-width="1"><path d="M6.4,1.6 H0.6 V11.8 H10.6 V6.4"/><path d="M4.4,8.4 L5,6.2 L10.4,0.8 L12,2.4 L6.6,7.8 Z" stroke-linejoin="round"/></svg>
<svg style="left:880px;top:455.6px" width="11.6" height="11.6" viewBox="0 0 11.6 11.6"><rect width="11.6" height="11.6" rx="0.8" fill="#ececec"/><text x="5.8" y="9.2" font-size="8.4" font-weight="700" fill="#2a2a2a" text-anchor="middle" textLength="9.6" lengthAdjust="spacingAndGlyphs" font-family="Liberation Sans, sans-serif">FX</text></svg>
<svg style="left:895.6px;top:455.6px" width="11.6" height="11.6" viewBox="0 0 11.6 11.6"><rect width="11.6" height="11.6" rx="0.8" fill="#ececec"/><circle cx="5.8" cy="5.8" r="3.5" fill="#2a2a2a"/></svg>
<svg style="left:912px;top:455.6px" width="10" height="11.6" viewBox="0 0 10 11.6"><path d="M0,0 H10 C10,3.4 7,4.4 7,5.8 C7,7.2 10,8.2 10,11.6 H0 C0,8.2 3,7.2 3,5.8 C3,4.4 0,3.4 0,0 Z" fill="#ececec"/></svg>
<svg style="left:926.8px;top:455.4px" width="12" height="12" viewBox="0 0 12 12"><circle cx="6" cy="6" r="5.4" fill="#ececec" stroke="#ececec" stroke-width="1.1"/><path d="M8.6,1.7 A5,5 0 0 0 1.5,7.6 Z" fill="#333"/></svg>
<svg style="left:961.2px;top:455.6px" width="11.6" height="11.6" viewBox="0 0 11.6 11.6"><rect x="0.5" y="0.5" width="10.6" height="10.6" fill="none" stroke="#d0d0d0" stroke-width="1"/><circle cx="4.8" cy="4.6" r="2.8" fill="#e4e4e4"/><rect x="4.6" y="4.8" width="4.8" height="4.6" rx="1.2" fill="#dcdcdc"/><circle cx="4.8" cy="4.6" r="2.8" fill="none" stroke="#333" stroke-width="0.5"/></svg>
<svg style="left:976.8px;top:456.2px" width="12" height="10.6" viewBox="0 0 12 10.6" fill="none" stroke="#b8b8b8" stroke-width="1" stroke-linejoin="round"><path d="M0.5,10.1 V0.5 H4.6 L5.8,2.2 H11.5 V10.1 Z"/><path d="M0.5,3.6 H11.5"/></svg>
<svg style="left:992.5px;top:455.8px" width="10.9" height="10.9" viewBox="0 0 5 5" fill="#f0f0f0"><path d="M0,0h1v1h-1zM2,0h1v1h-1zM4,0h1v1h-1zM1,1h1v1h-1zM3,1h1v1h-1zM0,2h1v1h-1zM2,2h1v1h-1zM4,2h1v1h-1zM1,3h1v1h-1zM3,3h1v1h-1zM0,4h1v1h-1zM2,4h1v1h-1zM4,4h1v1h-1z"/></svg>
<svg style="left:1009.4px;top:455.2px" width="9.6" height="12.4" viewBox="0 0 10 12.4" fill="none" stroke="#a8a8a8" stroke-width="1"><path d="M0.6,2.6 H9.4 M3.2,2.4 C3.4,0.8 6.6,0.8 6.8,2.4"/><path d="M1.4,2.8 L1.8,11 C1.9,11.6 2.3,11.8 2.8,11.8 H7.2 C7.7,11.8 8.1,11.6 8.2,11 L8.6,2.8"/><path d="M3.6,4.6 V10 M5,4.6 V10 M6.4,4.6 V10" stroke-width="0.9"/></svg>

<!-- ===== TRANSFORM PANEL ===== -->
<div class="hdr" style="top:473px;height:20.4px;background:#1f1f1f"></div>
<div class="grip" style="top:477.4px;height:12.4px"></div>
<div class="pill" style="left:850.2px;top:477.2px;width:23.6px;height:12.8px"></div>
<div class="t b" style="left:854.6px;top:478px;font-size:7.4px;color:#fff">変形</div>
<div class="t m g" style="left:878px;top:478px;font-size:7.4px">ナビゲータ</div>
<div class="t m g" style="left:923px;top:478px;font-size:7.4px">履歴</div>
<div class="vbtn" style="top:477.6px"></div>
<svg style="left:1009.8px;top:480.8px" width="7" height="6" viewBox="0 0 7 6" fill="none" stroke="#f0f0f0" stroke-width="1.3" stroke-linecap="round" stroke-linejoin="round"><path d="M0.9,1 L3.5,4.6 L6.1,1"/></svg>

<svg style="left:849.4px;top:511.8px" width="28" height="28" viewBox="0 0 28 28" fill="#666666">
  <rect x="2.4" y="2.4" width="23.2" height="23.2" fill="#686868"/>
  <circle cx="2.4" cy="2.4" r="1.5"/><circle cx="14" cy="2.4" r="1.5"/><circle cx="25.6" cy="2.4" r="1.5"/>
  <circle cx="2.4" cy="14" r="1.5"/><circle cx="25.6" cy="14" r="1.5"/>
  <circle cx="2.4" cy="25.6" r="1.5"/><circle cx="14" cy="25.6" r="1.5"/><circle cx="25.6" cy="25.6" r="1.5"/>
  <circle cx="14" cy="14" r="1.3" fill="#555"/>
</svg>
<div class="t b" style="left:892.8px;top:504.6px;font-size:8.1px;color:#f2f2f2">X:</div>
<div class="fld" style="left:903px;top:504.6px;width:42.2px;height:11.2px"></div>
<div class="t" style="left:905.6px;top:504.2px;font-size:8.6px;color:#6a6a6a">0 mm</div>
<div class="t b" style="left:892.8px;top:520.4px;font-size:8.1px;color:#f2f2f2">Y:</div>
<div class="fld" style="left:903px;top:520.2px;width:42.2px;height:11.2px"></div>
<div class="t" style="left:905.6px;top:520px;font-size:8.6px;color:#6a6a6a">0 mm</div>
<div class="t b" style="left:892.6px;top:538.8px;font-size:8.1px;color:#f2f2f2">R:</div>
<div class="fld" style="left:903px;top:538.6px;width:42.2px;height:11.2px"></div>
<div class="t" style="left:905.6px;top:538.2px;font-size:8.6px;color:#6a6a6a">0 °</div>
<svg style="left:939.4px;top:542.8px" width="4.6" height="3.2" viewBox="0 0 6 4" fill="none" stroke="#8a8a8a" stroke-width="1.5"><path d="M0.8,0.7 L3,3 L5.2,0.7"/></svg>

<div class="t b" style="left:953.2px;top:504.6px;font-size:8.1px;color:#f2f2f2">W:</div>
<div class="fld" style="left:966.2px;top:504.6px;width:42.4px;height:11.2px"></div>
<div class="t" style="left:968.6px;top:504.2px;font-size:8.6px;color:#6a6a6a">0 mm</div>
<div class="t b" style="left:954.8px;top:519.6px;font-size:8.1px;color:#f2f2f2">H:</div>
<div class="fld" style="left:966.2px;top:520.2px;width:42.4px;height:11.2px"></div>
<div class="t" style="left:968.6px;top:520px;font-size:8.6px;color:#6a6a6a">0 mm</div>
<div class="t b" style="left:955.4px;top:538.8px;font-size:8.1px;color:#f2f2f2">S:</div>
<div class="fld" style="left:966.2px;top:538.6px;width:42.4px;height:11.2px"></div>
<div class="t" style="left:968.6px;top:538.2px;font-size:8.6px;color:#6a6a6a">0 °</div>
<svg style="left:1002.2px;top:542.8px" width="4.6" height="3.2" viewBox="0 0 6 4" fill="none" stroke="#8a8a8a" stroke-width="1.5"><path d="M0.8,0.7 L3,3 L5.2,0.7"/></svg>
<svg style="left:1013.4px;top:511px" width="6" height="15" viewBox="0 0 6 15" fill="none" stroke="#a4a4a4" stroke-width="1"><rect x="0.8" y="0.6" width="4.4" height="6.6" rx="1.8"/><rect x="0.8" y="7.8" width="4.4" height="6.6" rx="1.8"/><path d="M3,5 V10" stroke="#333" stroke-width="2.4"/><path d="M3,5.4 V9.6" stroke="#c8c8c8" stroke-width="0.01"/></svg>
<svg style="left:984.8px;top:556.8px" width="11.4" height="10.8" viewBox="0 0 11.4 10.8" fill="none"><rect x="0.6" y="0.6" width="10" height="9.6" stroke="#d8d8d8" stroke-width="1.1" stroke-dasharray="3.2 2"/><rect x="0" y="4.8" width="6.2" height="6" rx="1.2" fill="#ececec"/></svg>
<svg style="left:1003px;top:560.4px" width="4.6" height="3.2" viewBox="0 0 6 4" fill="none" stroke="#e0e0e0" stroke-width="1.6"><path d="M0.8,0.7 L3,3 L5.2,0.7"/></svg>

<div class="abs" style="left:0;top:577.4px;width:1024px;height:1px;background:#2f2f2f"></div>
<div class="abs" style="left:0;top:578.4px;width:1024px;height:1.6px;background:#1f1f1f"></div>
<div class="abs" style="left:0;top:0;width:3px;height:3px;background:radial-gradient(circle at 100% 100%,#323232 2.3px,#c4c4c4 3.1px)"></div>
<div class="abs" style="left:1021px;top:0;width:3px;height:3px;background:radial-gradient(circle at 0% 100%,#323232 2.5px,#6a6a6a 3.3px)"></div>
<div class="abs" style="left:836px;top:68px;width:1px;height:512px;background:#151515"></div>
</div>
</body>
</html>
